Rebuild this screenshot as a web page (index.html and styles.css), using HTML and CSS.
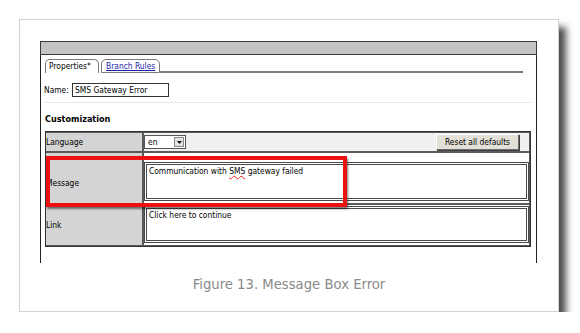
FILE: index.html
```html
<!DOCTYPE html>
<html lang="en">
<head>
  <meta charset="UTF-8">
  <title>Figure 13. Message Box Error</title>
  <meta name="viewport" content="width=device-width, initial-scale=1.0">
  <link rel="stylesheet" href="styles.css">
</head>
<body>
  <div class="figure">
    <div class="shot">
      <div class="titlebar"></div>
      <div class="panel">
        <div class="tabs">
          <div class="tab tab-active">Properties*</div>
          <div class="tab tab-link"><a href="#">Branch Rules</a></div>
          <div class="tab-line"></div>
        </div>

        <div class="name-row">
          <span class="name-label">Name:</span>
          <span class="text-input">SMS Gateway Error</span>
        </div>

        <div class="sep"></div>
        <h3 class="section-title">Customization</h3>

        <div class="table-wrap">
          <table class="props">
            <tr>
              <td class="label">Language</td>
              <td class="value value-lang">
                <div class="lang-cell">
                  <span class="select">en
                    <span class="select-btn">
                      <svg width="5" height="3" viewBox="0 0 5 3"><path d="M0 0h5L2.5 3z" fill="#111"/></svg>
                    </span>
                  </span>
                  <span class="btn">Reset all defaults</span>
                </div>
              </td>
            </tr>
            <tr>
              <td class="label label-msg">Message</td>
              <td class="value value-msg">
                <div class="textarea textarea-msg">Communication with <span class="misspelled">SMS</span> gateway failed</div>
              </td>
            </tr>
            <tr>
              <td class="label">Link</td>
              <td class="value value-link">
                <div class="textarea textarea-link">Click here to continue</div>
              </td>
            </tr>
          </table>
          <div class="highlight"></div>
        </div>
      </div>
    </div>
    <p class="caption">Figure 13. Message Box Error</p>
  </div>
</body>
</html>
```

FILE: styles.css
```css
body {
  margin: 0;
  background: #fff;
  font-family: "DejaVu Sans Condensed", "DejaVu Sans", sans-serif;
  font-stretch: condensed;
  color: #000;
}
.figure {
  margin: 19px 0 0 19px;
  width: 540px;
  height: 293px;
  box-sizing: border-box;
  border: 1px solid #d2d2d2;
  background: #fff;
  box-shadow: 7px 8px 7px rgba(0,0,0,0.7);
}
.shot {
  margin: 21px 0 0 20px;
  width: 497px;
}
.titlebar {
  height: 12px;
  background: #c3c3c3;
  border: 1px solid #3a3a3a;
}
.panel {
  height: 208px;
  box-sizing: border-box;
  border-left: 1px solid #222;
  border-right: 1px solid #222;
  padding: 4px 0 0 3px;
  font-size: 8.4px;
}
.tabs {
  display: flex;
  align-items: flex-end;
  height: 14px;
  margin-left: 1px;
}
.tab {
  height: 14px;
  box-sizing: border-box;
  border: 1px solid #7a7a7a;
  border-bottom: 0;
  border-radius: 5px 5px 0 0;
  line-height: 13px;
  padding: 0 3px;
  background: #fff;
}
.tab-active {
  width: 54px;
  margin-right: 2px;
}
.tab-link {
  width: 59px;
  padding-left: 4px;
  border-bottom: 1px solid #7a7a7a;
}
.tab-link a {
  color: #1c1ca8;
}
.tab-line {
  width: 363px;
  border-bottom: 2px solid #7a7a7a;
}
.name-row {
  display: flex;
  align-items: center;
  height: 14px;
  margin-top: 10px;
}
.name-label {
  width: 28px;
}
.text-input {
  width: 97px;
  height: 14px;
  box-sizing: border-box;
  border: 1px solid #333;
  padding: 0 2px;
  line-height: 12px;
}
.sep {
  width: 487px;
  height: 1px;
  margin-top: 5px;
  background: #e6e6e6;
}
.section-title {
  margin: 10px 0 0 1px;
  font-size: 9px;
  line-height: 12px;
  font-weight: bold;
}
.table-wrap {
  position: relative;
  width: 486px;
  margin: 6px 0 0 1px;
}
.props {
  width: 100%;
  border-collapse: separate;
  border-spacing: 0;
  border: 1px solid #333;
  font-size: 8.4px;
}
.props td {
  border: 1px solid #5a5a5a;
  padding: 0;
}
.props td.label {
  width: 96px;
  border-left: 0;
  background: #d4d4d4;
}
.props td.label-msg {
  padding-top: 10px;
}
.value-lang {
  background: #f0f0f0;
}
.lang-cell {
  height: 18px;
  display: flex;
  align-items: center;
  justify-content: space-between;
  padding-right: 10px;
}
.select {
  position: relative;
  width: 42px;
  height: 14px;
  box-sizing: border-box;
  border: 1px solid #555;
  background: #fff;
  padding-left: 3px;
  line-height: 12px;
}
.select-btn {
  position: absolute;
  right: 1px;
  top: 1px;
  width: 10px;
  height: 10px;
  box-sizing: border-box;
  border: 1px solid #888;
  background: #e4e4e4;
  display: flex;
  align-items: center;
  justify-content: center;
}
.btn {
  width: 83px;
  height: 16px;
  box-sizing: border-box;
  border: 1px solid;
  border-color: #fff #6d6d6d #6d6d6d #fff;
  box-shadow: 1px 1px 0 #404040;
  background: #e3e0d8;
  text-align: center;
  line-height: 14px;
}
.props td.value-msg {
  padding: 9px 0 2px 0;
}
.props td.value-link {
  padding: 1px 0 2px 0;
}
.textarea {
  box-sizing: border-box;
  border: 3px double #4a4a4a;
  background: #fff;
  padding: 1px 2px;
  line-height: 10px;
}
.textarea-msg {
  height: 39px;
}
.textarea-link {
  height: 37px;
}
.misspelled {
  text-decoration: underline wavy #e02020;
  text-decoration-thickness: 1px;
}
.highlight {
  position: absolute;
  left: 1px;
  top: 25px;
  width: 301px;
  height: 51px;
  box-sizing: border-box;
  border: 4px solid #ec1010;
  box-shadow: 1px 2px 2px rgba(0,0,0,0.5);
}
.caption {
  margin: 12px 0 0;
  text-align: center;
  font-size: 14.7px;
  line-height: 18px;
  color: #8a8a8a;
}
```
